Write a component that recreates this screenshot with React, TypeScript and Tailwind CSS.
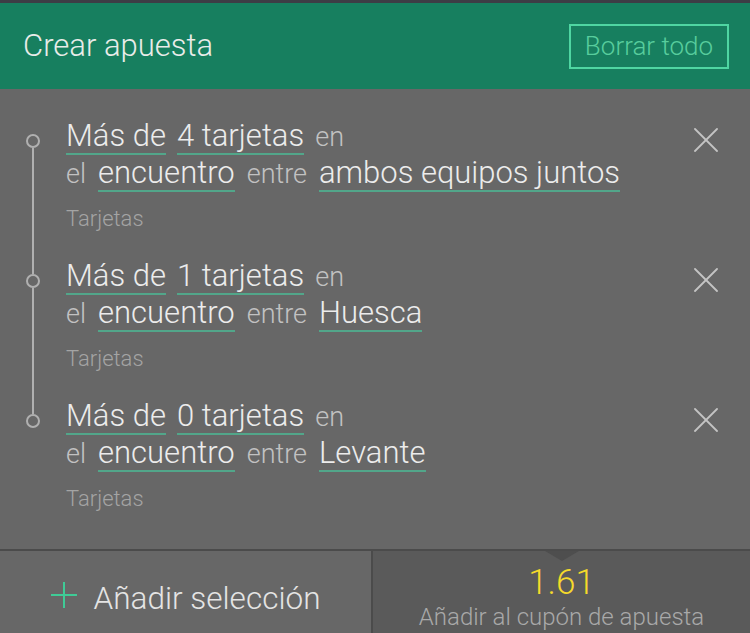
import React from "react";

type Selection = {
    count: string;
    team: string;
    market: string;
};

const selections: Selection[] = [
    { count: "4", team: "ambos equipos juntos", market: "Tarjetas" },
    { count: "1", team: "Huesca", market: "Tarjetas" },
    { count: "0", team: "Levante", market: "Tarjetas" },
];

const Pick = ({ children }: { children: React.ReactNode }) => (
    <span className="inline-block border-b-2 border-[#52a68a] text-[31px] leading-[35px] text-[#ececec]">
        {children}
    </span>
);

const Word = ({ children }: { children: React.ReactNode }) => (
    <span className="text-[27px] leading-[35px] text-[#c2c2c2]">{children}</span>
);

const CloseIcon = () => (
    <svg width="24" height="24" viewBox="0 0 24 24" fill="none" stroke="#c4c4c4" strokeWidth="1.8" strokeLinecap="round">
        <line x1="1" y1="1" x2="23" y2="23" />
        <line x1="23" y1="1" x2="1" y2="23" />
    </svg>
);

const SelectionRow = ({ sel, first, last }: { sel: Selection; first: boolean; last: boolean }) => (
    <div className="flex">
        {/* timeline */}
        <div className="w-[66px] flex flex-col items-center shrink-0">
            <div className={`w-[2px] h-[16px] ${first ? "" : "bg-[#b0b0b0]"}`} />
            <div className="w-[14px] h-[14px] rounded-full border-2 border-[#b0b0b0]" />
            <div className={`w-[2px] flex-1 ${last ? "" : "bg-[#b0b0b0]"}`} />
        </div>

        <div className="flex-1 pb-[25px]">
            <div className="flex items-baseline gap-x-[11px]">
                <Pick>Más de</Pick>
                <Pick>{sel.count} tarjetas</Pick>
                <Word>en</Word>
            </div>
            <div className="flex items-baseline gap-x-[12px]">
                <Word>el</Word>
                <Pick>encuentro</Pick>
                <Word>entre</Word>
                <Pick>{sel.team}</Pick>
            </div>
            <div className="mt-[13px] text-[22px] leading-[28px] text-[#a4a4a4]">{sel.market}</div>
        </div>

        <div className="pt-[10px] pr-[32px] shrink-0">
            <CloseIcon />
        </div>
    </div>
);

const App = () => {
    return (
        <div className="w-[750px] h-[633px] overflow-hidden bg-[#676767] font-light font-[family-name:Roboto,sans-serif]">
            <div className="h-[3px] bg-[#3d3c45]" />

            <div className="h-[86px] bg-[#177f5f] flex items-center justify-between pl-[23px] pr-[21px]">
                <span className="text-[31px] text-[#e9ece9]">Crear apuesta</span>
                <button className="w-[160px] h-[45px] border-2 border-[#4fd6a2] text-[26px] text-[#58cd9d] flex items-center justify-center">
                    Borrar todo
                </button>
            </div>

            <div className="h-[460px] pt-[29px]">
                {selections.map((s, i) => (
                    <SelectionRow key={i} sel={s} first={i === 0} last={i === selections.length - 1} />
                ))}
            </div>

            <div className="flex border-t-2 border-[#4b4b4b] h-[100px]">
                <div className="w-[373px] border-r-2 border-[#4b4b4b] bg-[#676767] flex items-start justify-center pt-[24px] gap-[17px]">
                    <svg width="26" height="26" viewBox="0 0 26 26" className="mt-[7px]" stroke="#3fcb96" strokeWidth="2">
                        <line x1="13" y1="0" x2="13" y2="26" />
                        <line x1="0" y1="13" x2="26" y2="13" />
                    </svg>
                    <span className="text-[31.5px] text-[#e4e4e4]">Añadir selección</span>
                </div>
                <div className="relative flex-1 bg-[#5a5a5a] flex flex-col items-center pt-[14px]">
                    <div className="absolute top-0 left-1/2 -translate-x-1/2 w-0 h-0 border-l-[17px] border-r-[17px] border-t-[10px] border-l-transparent border-r-transparent border-t-[#4e4e4e]" />
                    <span className="text-[35px] leading-[35px] text-[#f6da2b]">1.61</span>
                    <span className="mt-[5px] text-[24px] leading-[24px] text-[#a9a9a9]">Añadir al cupón de apuesta</span>
                </div>
            </div>
        </div>
    );
};

export default App;
